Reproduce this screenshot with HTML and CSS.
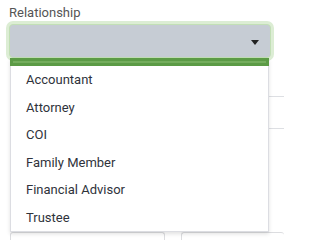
FILE: index.html
```html
<!DOCTYPE html>
<html>
<head>
<meta charset="utf-8">
<link rel="stylesheet" href="styles.css">
</head>
<body>
<div class="page">
  <div class="label">Relationship</div>
  <div class="select">
    <span class="arrow"></span>
  </div>
  <div class="bg-rows">
    <div class="bg-row"></div>
    <div class="bg-row"></div>
  </div>
  <div class="bg-inputs">
    <div class="bg-input"></div>
    <div class="bg-input wide"></div>
  </div>
  <div class="menu">
    <div class="menu-bar"></div>
    <ul class="options">
      <li>Accountant</li>
      <li>Attorney</li>
      <li>COI</li>
      <li>Family Member</li>
      <li>Financial Advisor</li>
      <li>Trustee</li>
    </ul>
  </div>
</div>
</body>
</html>
```
FILE: styles.css
```css
html, body {
  margin: 0;
  padding: 0;
  background: #fff;
}
body {
  width: 284px;
  height: 240px;
  overflow: hidden;
  font-family: Roboto, "Liberation Sans", Arial, sans-serif;
}
.page {
  position: relative;
  padding: 5px 0 0 9px;
}
.label {
  font-size: 13px;
  line-height: 16px;
  color: #555;
  height: 16px;
}
.select {
  margin-top: 3px;
  height: 32px;
  background: #c6ccd4;
  border: 1px solid #c2dfb6;
  border-radius: 4px;
  box-shadow: 0 0 0 3px #dcedd4;
  display: flex;
  align-items: center;
  justify-content: flex-end;
  padding-right: 11px;
  box-sizing: content-box;
  width: 249px;
}
.arrow {
  width: 0;
  height: 0;
  border-left: 4px solid transparent;
  border-right: 4px solid transparent;
  border-top: 5px solid #222;
  margin-top: 2px;
}
.bg-rows {
  margin-top: 3px;
  padding-left: 1px;
}
.bg-row {
  height: 32px;
  border-bottom: 1px solid #dddfe3;
  box-sizing: border-box;
}
.bg-row:first-child {
  height: 36px;
}
.bg-inputs {
  margin-top: 103px;
  display: flex;
  gap: 16px;
  padding-left: 1px;
}
.bg-input {
  width: 155px;
  height: 8px;
  border: 1px solid #dcdde0;
  border-bottom: none;
  border-radius: 3px 3px 0 0;
  box-sizing: border-box;
}
.bg-input.wide {
  flex: 1;
  border-right: none;
}
.menu {
  position: absolute;
  left: 10px;
  top: 58px;
  width: 259px;
  height: 174px;
  background: #fff;
  border: 1px solid #dcdde2;
  border-top: none;
  box-sizing: border-box;
  box-shadow: 0 2px 4px rgba(0,0,0,0.12);
}
.menu-bar {
  height: 8px;
  background: #5c9b46;
  margin: 0 -1px;
  position: relative;
}
.menu-bar::after {
  content: "";
  position: absolute;
  left: 3px;
  right: 3px;
  top: 3px;
  height: 2px;
  background: #74ad5d;
}
.options {
  list-style: none;
  margin: 0;
  padding: 0;
}
.options li {
  height: 27.5px;
  line-height: 27.5px;
  padding-left: 15px;
  font-size: 13px;
  color: #2f333b;
}
```
